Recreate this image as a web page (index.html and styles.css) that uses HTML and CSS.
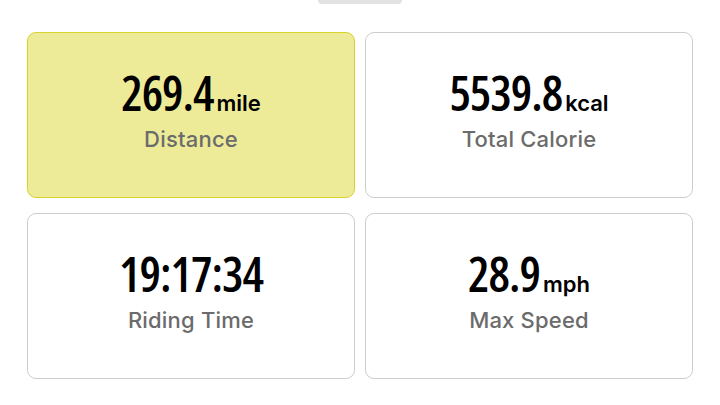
FILE: index.html
```html
<html>
    <head>
        <meta charset="utf-8">
        <title>Ride summary</title>
        <link rel="stylesheet" href="styles.css">
    </head>
    <body>
        <div class="alca"></div>
        <div class="painel">
            <div class="cartao ativo">
                <div class="valor">269.4<span class="unidade">mile</span></div>
                <div class="rotulo">Distance</div>
            </div>
            <div class="cartao">
                <div class="valor">5539.8<span class="unidade">kcal</span></div>
                <div class="rotulo">Total Calorie</div>
            </div>
            <div class="cartao">
                <div class="valor">19:17:34</div>
                <div class="rotulo">Riding Time</div>
            </div>
            <div class="cartao">
                <div class="valor">28.9<span class="unidade">mph</span></div>
                <div class="rotulo">Max Speed</div>
            </div>
        </div>
    </body>
</html>
```

FILE: styles.css
```css
*{
    box-sizing: border-box;
}
body{
    margin: 0;
    background-color: #ffffff;
    font-family: Inter, 'Liberation Sans', sans-serif;
}
/* barrinha cinza no topo */
div.alca{
    width: 84px;
    height: 4px;
    margin: 0 auto;
    background-color: #e2e2e2;
    border-radius: 0 0 4px 4px;
}
div.painel{
    display: grid;
    grid-template-columns: 328px 328px;
    grid-template-rows: 166px 166px;
    column-gap: 10px;
    row-gap: 15px;
    padding: 28px 0 0 27px;
}
div.cartao{
    display: flex;
    flex-direction: column;
    align-items: center;
    justify-content: center;
    padding-bottom: 11px;
    border: 1.5px solid #cdcdcd;
    border-radius: 9px;
    background-color: #ffffff;
}
div.cartao.ativo{
    background-color: #eeeb98;
    border-color: #d8d22c;
}
div.valor{
    font-family: 'Open Sans', Roboto, sans-serif;
    font-stretch: 75%;
    font-weight: 650;
    font-size: 48px;
    line-height: 48px;
    letter-spacing: -1px;
    color: #000000;
}
span.unidade{
    font-family: Inter, 'Liberation Sans', sans-serif;
    font-stretch: normal;
    font-weight: 600;
    font-size: 22px;
    line-height: 22px;
    letter-spacing: 0;
    margin-left: 3px;
}
div.rotulo{
    margin-top: 10px;
    font-size: 22px;
    line-height: 24px;
    font-weight: 500;
    letter-spacing: 0.2px;
    color: #6b6b6b;
}
```
